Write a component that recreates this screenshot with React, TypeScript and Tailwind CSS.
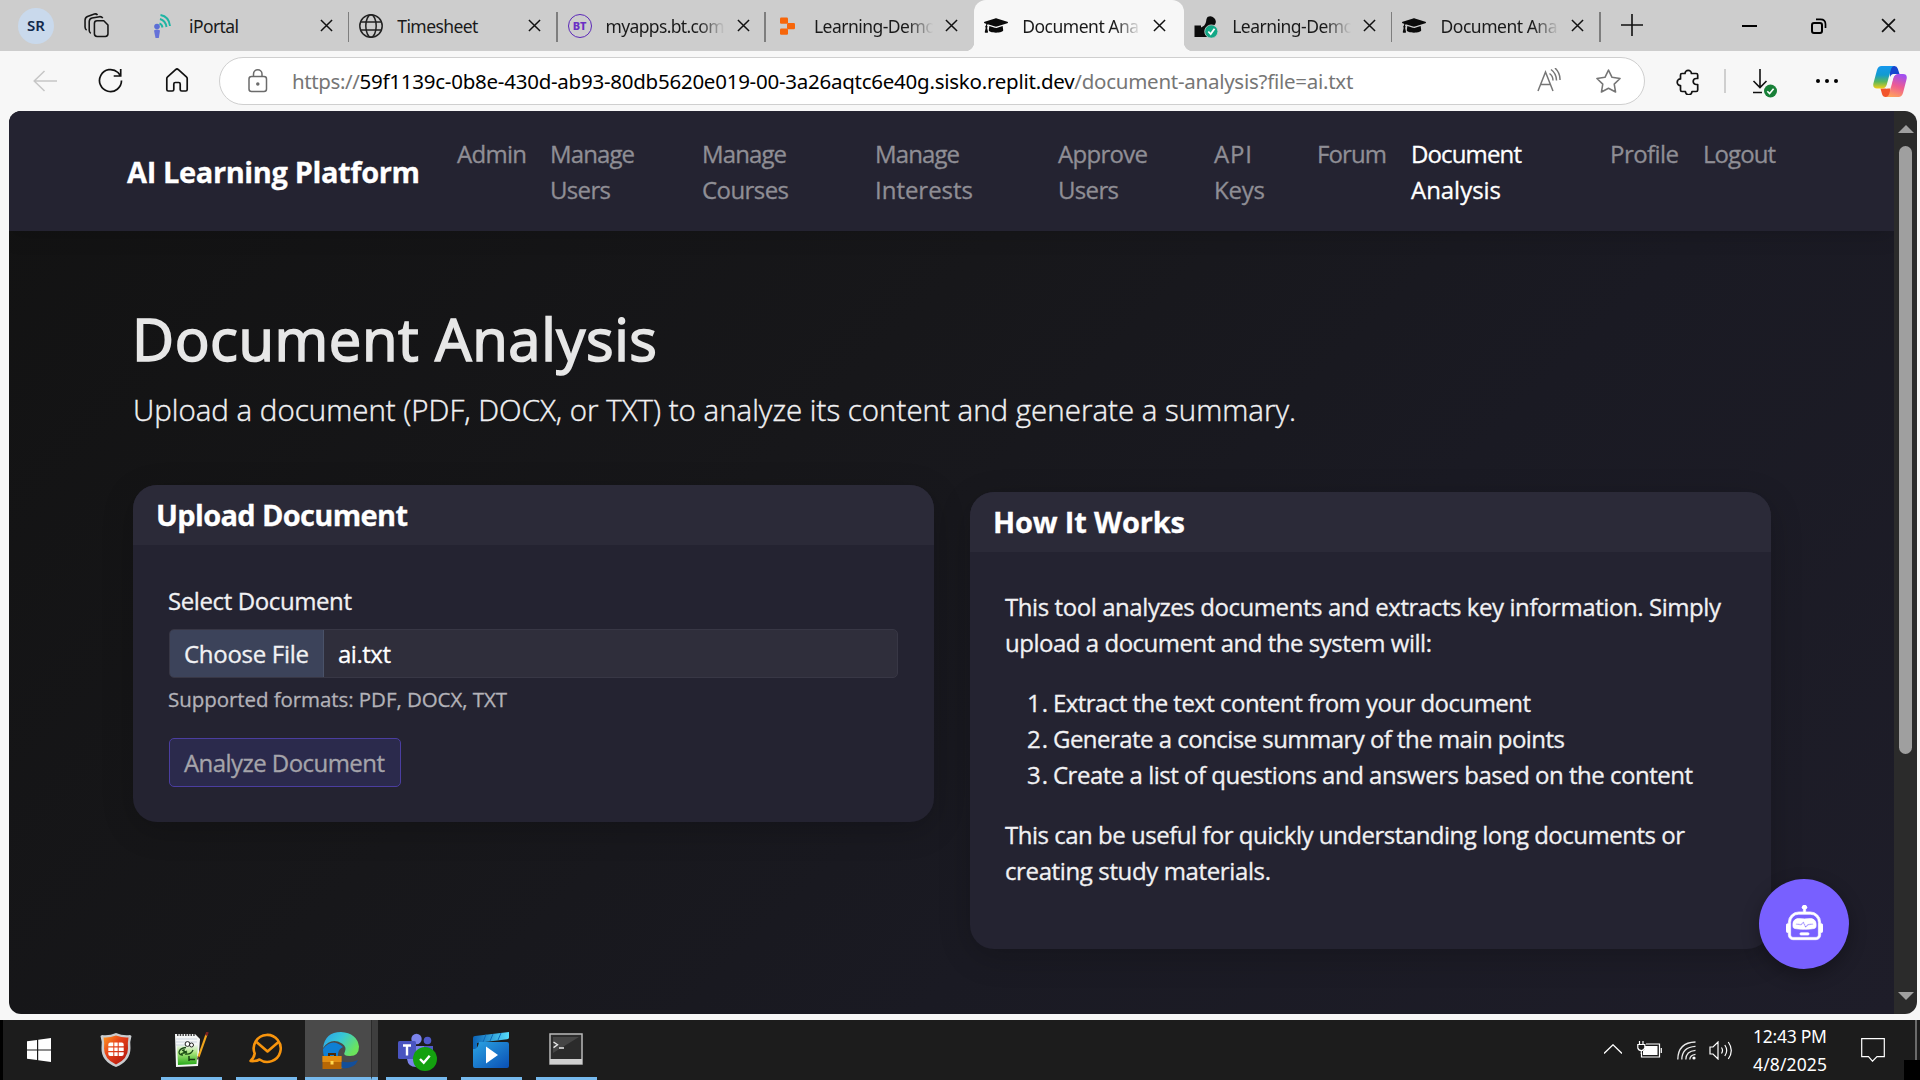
import React, { useLayoutEffect, useRef, useState } from "react";
import { FaGraduationCap } from "react-icons/fa";
import { BsRobot } from "react-icons/bs";

/* Single line of text whose tracking is adjusted to fill the given width. */
function Line({ w, children, className = "" }: { w: number; children: string; className?: string }) {
  const ref = useRef<HTMLSpanElement>(null);
  const [spacing, setSpacing] = useState(0);
  useLayoutEffect(() => {
    const el = ref.current;
    if (!el) return;
    el.style.letterSpacing = "0px";
    const natural = el.getBoundingClientRect().width;
    setSpacing((w - natural) / Math.max(1, children.length - 1));
    el.style.letterSpacing = `${(w - natural) / Math.max(1, children.length - 1)}px`;
  }, [w, children]);
  return (
    <span ref={ref} className={`inline-block whitespace-pre ${className}`} style={{ letterSpacing: `${spacing}px` }}>
      {children}
    </span>
  );
}

const Cross = ({ className = "" }: { className?: string }) => (
  <svg viewBox="0 0 14 14" className={className} fill="none" stroke="#111" strokeWidth="1.6">
    <path d="M1 1l12 12M13 1L1 13" />
  </svg>
);

const PortalIcon = () => (
  <svg viewBox="0 0 24 24" className="size-6" fill="none">
    <circle cx="6" cy="12.500" r="2.800" fill="#5b6fd6" />
    <path d="M3 16.500q3-2 6 0l-1.200 7.500H4.500z" fill="#6672d8" />
    <path d="M8.500 9.500q2.500.8 3 4M9 5q5.500 1.500 6.500 8M9.500 1q8.500 1.500 9.500 11" stroke="#1fb5a4" strokeWidth="1.900" />
  </svg>
);

const GlobeIcon = () => (
  <svg viewBox="0 0 24 24" className="size-6" fill="none" stroke="#222" strokeWidth="1.5">
    <circle cx="12" cy="12" r="11.2" />
    <ellipse cx="12" cy="12" rx="5.2" ry="11.200" />
    <path d="M1.800 8h20.400M1.800 16h20.400" />
  </svg>
);

const BtIcon = () => (
  <span className="flex size-6 items-center justify-center rounded-full border-[1.5px] border-[#5b28b8] text-[11px] leading-none font-extrabold text-[#6a2fc4]">
    BT
  </span>
);

const ReplitIcon = () => (
  <svg viewBox="0 0 24 24" className="size-6" fill="#f7660a">
    <rect x="4" y="3.500" width="8" height="6.300" rx="1.200" />
    <rect x="11" y="9" width="8" height="6.300" rx="1.200" />
    <rect x="4" y="14.500" width="8" height="6.300" rx="1.200" />
  </svg>
);

const SonarIcon = () => (
  <svg viewBox="0 0 24 24" className="size-6">
    <path d="M.5 11.500h6.500v2q4-1.500 5-5.500 0-3 1.500-5a5.500 5.500 0 0 1 7.500 7.500q-1.500 1.500-4 1.500l-4 4v7H.5z" fill="#0b0b0b" />
    <circle cx="17.300" cy="17.500" r="6.600" fill="#12a886" stroke="#cdcdcd" strokeWidth=".8" />
    <path d="M14.300 17.500l2.400 2.500 3.800-5.200" fill="none" stroke="#fff" strokeWidth="1.800" />
  </svg>
);

const CapIcon = () => <FaGraduationCap size={25} color="#0a0a0a" />;

const tabs = [
  { icon: <PortalIcon />, label: "iPortal", w: 50 },
  { icon: <GlobeIcon />, label: "Timesheet", w: 81 },
  { icon: <BtIcon />, label: "myapps.bt.com", w: 119, fade: true },
  { icon: <ReplitIcon />, label: "Learning-Demo", w: 122, fade: true },
  { icon: <CapIcon />, label: "Document Ana", w: 117, fade: true, active: true },
  { icon: <SonarIcon />, label: "Learning-Demo", w: 122, fade: true },
  { icon: <CapIcon />, label: "Document Ana", w: 117, fade: true },
];

function TabStrip() {
  return (
    <div className="flex h-[51px] shrink-0 items-stretch bg-[#cdcdcd] text-[#1a1a1a]">
      <div className="flex w-[141px] shrink-0 items-center">
        <span className="ml-[18px] flex size-9 items-center justify-center rounded-full bg-[#c9d9ec] text-[15px] font-semibold text-[#12294d]">
          SR
        </span>
        <svg viewBox="0 0 24 24" className="ml-[30px] size-[25px]" fill="none" stroke="#161616" strokeWidth="1.500" strokeLinejoin="round">
          <path d="M12.500 7.500h6.500l4 4V20q0 2.500-2.500 2.500h-8Q10 22.500 10 20V10q0-2.500 2.500-2.500z" />
          <path d="M6.500 19.500q-1.500-1-1.500-3V8.500q0-3 2.700-3.700L15 3.500q2-.2 3 1.500M2.500 16.500Q1 15.500 1 13.500V7q0-2.600 2.300-3.700L10 .9q2-.3 3 1" />
        </svg>
      </div>
      {tabs.map((t, i) => (
        <div
          key={i}
          className={
            t.active
              ? "relative flex w-[210px] shrink-0 items-center rounded-t-[12px] bg-[#f7f7f7] pl-[10px]"
              : "relative flex w-[208.300px] shrink-0 items-center pl-[10px]"
          }
        >
          {t.active && (
            <>
              <span className="absolute bottom-0 -left-[9px] size-[9px] bg-[radial-gradient(circle_at_0_0,#cdcdcd_9px,#f7f7f7_9.500px)]" />
              <span className="absolute -right-[9px] bottom-0 size-[9px] bg-[radial-gradient(circle_at_100%_0,#cdcdcd_9px,#f7f7f7_9.500px)]" />
            </>
          )}
          <span className="flex w-6 justify-center">{t.icon}</span>
          <span
            className={
              t.fade
                ? "ml-[14px] w-[119px] overflow-hidden text-[17.500px] leading-6 [mask-image:linear-gradient(90deg,#000_78%,transparent)]"
                : "ml-[14px] w-[119px] overflow-hidden text-[17.500px] leading-6"
            }
          >
            <Line w={t.w}>{t.label}</Line>
          </span>
          <Cross className="ml-[12px] size-[13px]" />
          {(i === 0 || i === 1 || i === 2 || i === 5 || i === 6) && (
            <span className="absolute top-[12px] right-0 h-[30px] w-[1.500px] bg-[#7e7e7e]" />
          )}
        </div>
      ))}
      <svg viewBox="0 0 22 22" className="mt-[14px] ml-[20px] size-[22px]" fill="none" stroke="#111" strokeWidth="1.600">
        <path d="M11 0v22M0 11h22" />
      </svg>
      <div className="ml-auto flex items-center gap-[54px] pr-[24px]">
        <span className="h-[2px] w-[15px] bg-black" />
        <svg viewBox="0 0 16 16" className="size-4" fill="none" stroke="#000" strokeWidth="2">
          <rect x="1" y="5" width="10" height="10" rx="2" />
          <path d="M5 1.300h4.500q5 0 5 5V10" strokeWidth="1.700" />
        </svg>
        <Cross className="size-[15px]" />
      </div>
    </div>
  );
}

function Toolbar() {
  return (
    <div className="flex h-[60px] shrink-0 items-start bg-[#f7f7f7]">
      <svg viewBox="0 0 24 22" className="mt-[19px] ml-[33px] h-[22px] w-6" fill="none" stroke="#c6c6c6" strokeWidth="1.500">
        <path d="M24 11H1M11.500 1L1.200 11l10.300 10" />
      </svg>
      <svg viewBox="0 0 25 25" className="mt-[17px] ml-[41px] size-[25px]" fill="none" stroke="#111" strokeWidth="1.700">
        <path d="M23.500 12.500a11 11 0 1 1-3.500-8l2.500 3.200M22.700 1v7h-7" />
      </svg>
      <svg viewBox="0 0 24 24" className="mt-[17px] ml-[42px] size-6" fill="none" stroke="#111" strokeWidth="1.700" strokeLinejoin="round">
        <path d="M1.800 10.500q0-1 .8-1.700l8-7.200q1.400-1.200 2.800 0l8 7.200q.8.700.8 1.700v11q0 1.500-1.500 1.500h-4q-1.500 0-1.500-1.500V16q0-1.500-1.500-1.500h-3.400Q8.800 14.500 8.800 16v5.500q0 1.500-1.500 1.500h-4q-1.500 0-1.500-1.500z" />
      </svg>
      <div className="mt-[6px] ml-[30px] flex h-[48px] w-[1426px] items-center rounded-full border-[1.500px] border-[#cfcfcf] bg-white">
        <svg viewBox="0 0 20 24" className="ml-[28px] h-6 w-5" fill="none" stroke="#6b6b6b" strokeWidth="1.500">
          <rect x="1" y="7.500" width="17.500" height="15" rx="2.500" />
          <path d="M5.500 7.500V5a4.200 4.200 0 0 1 8.500 0v2.500" />
          <circle cx="9.800" cy="15" r="1" fill="#6b6b6b" />
        </svg>
        <div className="-mt-px ml-[24px] flex w-[1245px] text-[20.500px] leading-[30px]">
          <Line w={68} className="text-[#767676]">https://</Line>
          <Line w={715} className="text-black">59f1139c-0b8e-430d-ab93-80db5620e019-00-3a26aqtc6e40g.sisko.replit.dev</Line>
          <Line w={279} className="text-[#767676]">/document-analysis?file=ai.txt</Line>
        </div>
        <svg viewBox="0 0 24 24" className="-mt-[2px] size-6" fill="none" stroke="#767676" strokeWidth="1.500">
          <path d="M1 23L8.500 4l7.500 19M3.700 16.500h9.600M12.500 5.500q3.500 2.500 3.500 7M14 1.500q5.500 4 5.500 11M18 0q5.300 5 5 12" />
        </svg>
        <svg viewBox="0 0 24 24" className="ml-[35px] size-[25px]" fill="none" stroke="#767676" strokeWidth="1.500" strokeLinejoin="round">
          <path d="M12 1l3.400 7 7.700 1.100-5.600 5.400 1.300 7.600-6.800-3.600-6.800 3.600 1.300-7.600L.9 9.100 8.600 8z" />
        </svg>
      </div>
      <svg viewBox="0 0 24 26" className="mt-[18px] ml-[31px] h-[26px] w-6" fill="none" stroke="#111" strokeWidth="1.700" strokeLinejoin="round">
        <path d="M4.500 6q0-1.500 1.500-1.500h3a3.200 3.200 0 0 1 6.400 0h4.800q1.500 0 1.500 1.500v3.500h-1.500a3 3 0 0 0 0 6h1.500V21q0 1.500-1.500 1.500H16a3.300 3.300 0 0 1-6.600 0H6q-1.500 0-1.500-1.500v-4.500a3.300 3.300 0 0 1 0-6.600z" />
      </svg>
      <span className="mt-[18px] ml-[24px] h-6 w-[1.500px] bg-[#cfcfcf]" />
      <svg viewBox="0 0 26 30" className="mt-[18px] ml-[26px] h-[30px] w-[26px]" fill="none" stroke="#111" strokeWidth="1.600">
        <path d="M8 0v18M1.500 12L8 18.500 14.500 12M1 23.500h9" />
        <circle cx="18.500" cy="22" r="6.500" fill="#188038" stroke="none" />
        <path d="M15.300 22.200l2.300 2.400 4-4.800" stroke="#fff" />
      </svg>
      <div className="mt-[28px] ml-[38px] flex gap-[5px]">
        <span className="size-[4px] rounded-full bg-black" />
        <span className="size-[4px] rounded-full bg-black" />
        <span className="size-[4px] rounded-full bg-black" />
      </div>
      <svg viewBox="0 0 34 31" className="mt-[15px] ml-[35px] h-[31px] w-[34px]">
        <defs>
          <linearGradient id="cpA" x1="0" y1="0" x2="0" y2="1">
            <stop offset="0" stopColor="#1698ee" />
            <stop offset=".4" stopColor="#139bd0" />
            <stop offset=".7" stopColor="#5bb75c" />
            <stop offset="1" stopColor="#f5cd16" />
          </linearGradient>
          <linearGradient id="cpB" x1=".6" y1="0" x2=".3" y2="1">
            <stop offset="0" stopColor="#a14ff0" />
            <stop offset=".5" stopColor="#ee5c92" />
            <stop offset="1" stopColor="#ffa25c" />
          </linearGradient>
        </defs>
        <path d="M16 0h5.500q2.500 0 3.300 2.800L26.500 8H21q-3 0-4 3z" fill="#1746cf" />
        <path d="M18 31h-5.500q-2.700 0-3.500-3l-1.500-5.500H13q3 0 4-3z" fill="#f2552c" />
        <path d="M8.500 0H21q-2.300.3-3 3l-4.200 15.500q-1.200 4-4.800 4H4Q-.8 22.500.5 17L4 4Q5.200 0 8.500 0z" fill="url(#cpA)" />
        <path d="M25.500 31H13q2.500-.3 3.200-3l4-15.500q1.200-4.500 4.800-4.500h5q4.800 0 3.500 5.500L30 27q-1.200 4-4.500 4z" fill="url(#cpB)" />
        <path d="M19.500 8.500Q22 8 24 8q-3 .5-4 4l-3 10.500h-4.500q2-.5 3-4z" fill="#f7f7f7" />
      </svg>
    </div>
  );
}

const nav = [
  { lines: [["Admin", 70]], cls: "w-[93px]" },
  { lines: [["Manage", 85], ["Users", 61]], cls: "w-[152px]" },
  { lines: [["Manage", 85], ["Courses", 87]], cls: "w-[173px]" },
  { lines: [["Manage", 85], ["Interests", 98]], cls: "w-[183px]" },
  { lines: [["Approve", 90], ["Users", 61]], cls: "w-[156px]" },
  { lines: [["API", 38], ["Keys", 51]], cls: "w-[103px]" },
  { lines: [["Forum", 70]], cls: "w-[94px]" },
  { lines: [["Document", 111], ["Analysis", 90]], cls: "w-[199px] text-white" },
  { lines: [["Profile", 69]], cls: "w-[93px]" },
  { lines: [["Logout", 73]], cls: "w-[80px]" },
] as { lines: [string, number][]; cls: string }[];

function Content() {
  return (
    <div className="flex w-[1885px] flex-col bg-[linear-gradient(135deg,#121212_0%,#17171a_40%,#1a1a23_65%,#1e1d29_100%)] font-['Open_Sans',sans-serif] text-2xl leading-9 text-[#f1f1f3] [-webkit-text-stroke:0.3px]">
      <header className="flex h-[120px] shrink-0 bg-[#242331] pl-[118px] shadow-[0_4px_20px_rgba(0,0,0,0.15)]">
        <div className="mt-[38px] w-[330px] text-[29px] leading-[45px] font-bold text-white">
          <Line w={293}>AI Learning Platform</Line>
        </div>
        <nav className="mt-[25px] flex text-[#8f8e95]">
          {nav.map((n, i) => (
            <a key={i} className={`flex flex-col items-start ${n.cls}`}>
              {n.lines.map(([t, w]) => (
                <Line key={t} w={w}>{t}</Line>
              ))}
            </a>
          ))}
        </nav>
      </header>
      <main className="flex flex-col pl-[124px]">
        <h1 className="mt-[72px] h-[72px] text-[58px] leading-[72px] font-medium text-[#e7e7e7] [-webkit-text-stroke:1.6px]">
          <Line w={525} className="-ml-px">Document Analysis</Line>
        </h1>
        <p className="mt-[12px] h-[45px] text-[29.500px] leading-[45px] font-light [-webkit-text-stroke:0.4px]">
          <Line w={1163}>Upload a document (PDF, DOCX, or TXT) to analyze its content and generate a summary.</Line>
        </p>
        <div className="mt-[53px] flex items-start gap-9">
          <section className="h-[337px] w-[801px] overflow-hidden rounded-3xl bg-[#242331] shadow-[0_8px_32px_rgba(0,0,0,0.2)]">
            <h2 className="h-[60px] bg-[#2b2a38] pt-[7px] pl-[23px] text-[29px] leading-[45px] font-bold text-white">
              <Line w={252}>Upload Document</Line>
            </h2>
            <div className="flex flex-col items-start pr-9 pl-[35px] pt-[38px]">
              <Line w={184}>Select Document</Line>
              <div className="mt-[10px] ml-px flex h-[49px] w-[729px] items-stretch overflow-hidden rounded-[5px] border-[1.500px] border-[#383745] bg-[#2f2e3b] leading-[47px]">
                <span className="w-[154px] border-r border-[#4a5268] bg-[#3c435a] pl-[14px]">
                  <Line w={125}>Choose File</Line>
                </span>
                <Line w={53} className="ml-[14px] text-white">ai.txt</Line>
              </div>
              <Line w={339} className="mt-[5px] text-[20.500px] leading-[32px] text-[#b3b2b8]">Supported formats: PDF, DOCX, TXT</Line>
              <button className="mt-[23px] ml-px h-[49px] w-[232px] rounded-[5px] border-[1.500px] border-[#4b3ea0] bg-[#2b2a4c] pl-[14px] text-left leading-[46px] text-[#a5a4aa]">
                <Line w={201}>Analyze Document</Line>
              </button>
            </div>
          </section>
          <section className="mt-[7px] h-[457px] w-[801px] overflow-hidden rounded-3xl bg-[#242331] shadow-[0_8px_32px_rgba(0,0,0,0.2)]">
            <h2 className="h-[60px] bg-[#2b2a38] pt-[7px] pl-[23px] text-[29px] leading-[45px] font-bold text-white">
              <Line w={192}>How It Works</Line>
            </h2>
            <div className="flex flex-col items-start gap-6 pt-[37px] pl-[35px]">
              <p className="flex flex-col items-start">
                <Line w={716}>This tool analyzes documents and extracts key information. Simply</Line>
                <Line w={427}>upload a document and the system will:</Line>
              </p>
              <div className="flex flex-col pl-[22px]">
                <div className="flex"><span className="w-[26px]"><Line w={21}>1.</Line></span><Line w={478}>Extract the text content from your document</Line></div>
                <div className="flex"><span className="w-[26px]"><Line w={21}>2.</Line></span><Line w={512}>Generate a concise summary of the main points</Line></div>
                <div className="flex"><span className="w-[26px]"><Line w={21}>3.</Line></span><Line w={640}>Create a list of questions and answers based on the content</Line></div>
              </div>
              <p className="flex flex-col items-start">
                <Line w={680}>This can be useful for quickly understanding long documents or</Line>
                <Line w={266}>creating study materials.</Line>
              </p>
            </div>
          </section>
        </div>
      </main>
    </div>
  );
}

const ShieldIcon = () => (
  <svg viewBox="0 0 32 36" className="h-9 w-8">
    <defs>
      <linearGradient id="sh" x1="0" y1="0" x2="1" y2="1">
        <stop offset="0" stopColor="#ff9a1f" />
        <stop offset=".4" stopColor="#e8421a" />
        <stop offset="1" stopColor="#a80f0c" />
      </linearGradient>
    </defs>
    <path d="M16 1q7 3 14 2l1.500 1q-2 6-1 12 0 13-14.500 19Q1 29 1.500 16q1-6-1-12L2 3q7 1 14-2z" fill="#c9cccf" />
    <path d="M16 3.500q6.500 2.500 12.500 2-1 5-.5 11 0 10.500-12 16-12-5.500-12-16 .5-6-.5-11 6 .5 12.500-2z" fill="url(#sh)" />
    <g fill="#fff">
      <path d="M10.300 10.500h3v3.700H8.300v-1.700q0-2 2-2zM14.300 10.500h3.400v3.700h-3.400zM18.700 10.500h3q2 0 2 2v1.700h-5zM8.300 15.500h5v3.500h-5zM14.300 15.500h3.400v3.500h-3.400zM18.700 15.500h5v3.500h-5zM8.300 20.300h5V24h-3q-2 0-2-2zM14.300 20.300h3.400V24h-3.400zM18.700 20.300h5V22q0 2-2 2h-3z" />
    </g>
  </svg>
);

const NotepadIcon = () => (
  <svg viewBox="0 0 36 36" className="size-9">
    <defs>
      <linearGradient id="np" x1="0" y1="0" x2="0" y2="1">
        <stop offset="0" stopColor="#eef5ee" />
        <stop offset=".4" stopColor="#a8e67a" />
        <stop offset="1" stopColor="#25a818" />
      </linearGradient>
    </defs>
    <path d="M2 2h20l5 5-2 27L3 35z" fill="#f4f6f6" />
    <path d="M4 13h21l-1.500 19L5 33z" fill="url(#np)" />
    <path d="M3 7h21M3 10h21M3 13h12" stroke="#bcc7d6" strokeWidth=".7" />
    <path d="M4 3h18" stroke="#444" strokeWidth="2" strokeDasharray="1.500 1.200" />
    <path d="M6 20q1-4 7-4.500M12 22q6 1 8-4M6 20q0 3 4 3M9 18l5 3M8 22l6-3M11 17v5" stroke="#1d4d17" strokeWidth="1.300" fill="none" />
    <circle cx="14.500" cy="12" r="2.400" fill="#fff" stroke="#222" />
    <circle cx="18.500" cy="13" r="2" fill="#fff" stroke="#222" />
    <path d="M16 24v5M16 27.500h6" stroke="#163a10" strokeWidth="1.400" />
    <path d="M33.500 2.500L25.500 25" stroke="#f0a51c" strokeWidth="2.200" />
    <path d="M34.500 0l-1.200 3.500" stroke="#7d2320" strokeWidth="2.600" />
    <path d="M25.500 24.500L24.700 27.500" stroke="#51382a" strokeWidth="1.500" />
  </svg>
);

const MailIcon = () => (
  <svg viewBox="0 0 34 32" className="h-8 w-[34px]" fill="none" stroke="#f7940d" strokeWidth="2.600" strokeLinejoin="round">
    <path d="M5.700 20.500A13.500 13.500 0 1 1 10.500 26.500Q7 28.500 1.500 28q3.500-3 4.200-7.500z" />
    <path d="M7.500 9l11 9.500L29.500 9" />
  </svg>
);

const EdgeIcon = () => (
  <svg viewBox="0 0 38 38" className="size-[38px]">
    <defs>
      <linearGradient id="ed1" x1="0" y1="0" x2="1" y2=".5">
        <stop offset="0" stopColor="#2a9fe8" />
        <stop offset=".5" stopColor="#37c7d6" />
        <stop offset="1" stopColor="#6be45c" />
      </linearGradient>
    </defs>
    <path d="M1 18q0 19 18 19 3-.5 3-2-7-4-6-12 .5-5 5-7Q10 6 1 18z" fill="#0f7fd4" />
    <path d="M19 30q8 3 17-1-3 8-14 8.500-5-2-3-7.500z" fill="#134f9a" />
    <path d="M1 17Q3 1 19 1q16 1 18 14.500Q37 25 28 25q-8 0-5-4.500 2-4.500-3-8Q9 6 1 17z" fill="url(#ed1)" />
    <path d="M7 25v-2h6v2" fill="none" stroke="#4b2907" strokeWidth="2" />
    <rect x="0.500" y="25" width="19" height="13" fill="#b86704" />
    <rect x="0.500" y="25" width="19" height="6" fill="#e28e12" />
    <rect x="8.500" y="30" width="3" height="3.500" fill="#ffd84f" />
  </svg>
);

const TeamsIcon = () => (
  <svg viewBox="0 0 40 40" className="size-10">
    <circle cx="19.500" cy="7" r="5.200" fill="#7b83eb" />
    <circle cx="30.500" cy="8.500" r="3.800" fill="#5059c9" />
    <path d="M24 14h12v10q0 7-6 7-6-1-6-7z" fill="#5059c9" />
    <path d="M10 14h17v13q0 8-8 8t-9-8z" fill="#7b83eb" />
    <rect x="1" y="9" width="18" height="18" rx="1.500" fill="#4a54c0" />
    <path d="M6 13.500h8M10 13.500v10" stroke="#fff" strokeWidth="2.400" />
    <circle cx="28" cy="27" r="12" fill="#14a10f" />
    <path d="M23 27l3.700 3.700 6-7" fill="none" stroke="#fff" strokeWidth="2.400" />
  </svg>
);

const MoviesIcon = () => (
  <svg viewBox="0 0 36 36" className="size-9">
    <defs>
      <linearGradient id="mv" x1="0" y1="0" x2="1" y2="1">
        <stop offset="0" stopColor="#2ba4e3" />
        <stop offset="1" stopColor="#0a4fb4" />
      </linearGradient>
      <linearGradient id="mv2" x1="0" y1="0" x2="1" y2="0">
        <stop offset="0" stopColor="#0b62b5" />
        <stop offset="1" stopColor="#56dcfb" />
      </linearGradient>
    </defs>
    <path d="M0 6q0-2 2-2L36 0v5.500q0 1.500-2 1.700L4 11v6H0z" fill="url(#mv2)" />
    <path d="M13 2.500L10 10M20 2l-3 7M28 1l-3 7" stroke="#0d69b8" strokeWidth="1" />
    <path d="M6 10h28q2 0 2 2v22q0 2-2 2H2q-2 0-2-2V17h2q3-1 4-7z" fill="url(#mv)" />
    <path d="M13 14.500l12 8.500-12 8.500z" fill="#fff" />
  </svg>
);

const TerminalIcon = () => (
  <svg viewBox="0 0 34 32" className="h-8 w-[34px]">
    <rect x="1" y="1" width="32" height="30" fill="#2b2b2b" stroke="#b9b9b9" strokeWidth="1.500" />
    <rect x="1" y="26" width="32" height="5" fill="#cfcfcf" />
    <path d="M4 4h26L4 20z" fill="#454545" />
    <path d="M4.500 9l4 2.800-4 2.800M10 15h5" fill="none" stroke="#e8e8e8" strokeWidth="1.400" />
  </svg>
);

const apps = [
  { icon: <ShieldIcon />, cls: "w-[61px] mr-[14px] pr-[2px]" },
  { icon: <NotepadIcon />, cls: "w-[61px] mr-[14px] border-b-[3px] border-[#76b9ed] pt-[3px] pr-[2px]" },
  { icon: <MailIcon />, cls: "w-[61px] mr-[8px] border-b-[3px] border-[#76b9ed] pt-[1px] pr-[2px]" },
  { icon: <EdgeIcon />, cls: "w-[66px] border-b-[3px] border-[#76b9ed] bg-[#4a4a4a] pt-[3px] pl-[5px]" },
  { icon: null, cls: "w-[7px] mr-[8px] border-b-[3px] border-l border-l-[#2b2b2b] border-[#76b9ed] bg-[#3e3e3e]" },
  { icon: <TeamsIcon />, cls: "w-[61px] mr-[14px] border-b-[3px] border-[#76b9ed] pt-[7px]" },
  { icon: <MoviesIcon />, cls: "w-[61px] mr-[14px] border-b-[3px] border-[#76b9ed] pt-[3px] pr-px" },
  { icon: <TerminalIcon />, cls: "w-[61px] border-b-[3px] border-[#76b9ed] pr-px" },
];

function Taskbar() {
  return (
    <div className="flex h-[60px] shrink-0 items-stretch border-l-[3px] border-black bg-[#1c1c1c] text-white">
      <svg viewBox="0 0 24 24" className="mt-[18px] ml-[24px] size-6" fill="#fff">
        <path d="M0 3.300l10-1.400v9.600H0zM11.200 1.700L24 0v11.500H11.200zM0 12.600h10v9.500L0 20.700zM11.200 12.600H24V24l-12.800-1.700z" />
      </svg>
      <div className="ml-[35px] flex">
        {apps.map((a, i) => (
          <div key={i} className={`flex items-center justify-center ${a.cls}`}>{a.icon}</div>
        ))}
      </div>
      <div className="ml-auto flex items-start">
        <svg viewBox="0 0 18 10" className="mt-[24px] h-[10px] w-[18px]" fill="none" stroke="#fff" strokeWidth="1.300">
          <path d="M0 9.500L9 .8l9 8.700" />
        </svg>
        <svg viewBox="0 0 25 18" className="mt-[20px] ml-[15px] h-[18px] w-[25px]" fill="none" stroke="#fff" strokeWidth="1.200">
          <path d="M9 4h13.500v13H4.500V13M24.300 8v5" />
          <path d="M8 6h12.500v9H6v-4q2-1 2-3z" fill="#fff" stroke="none" />
          <path d="M2.500 1v3.500M6 1v3.500M.8 4.500h7V8Q7 10.500 4.300 10.500 1.500 10.500.8 8zM4.300 10.500V14" />
        </svg>
        <svg viewBox="0 0 20 19" className="mt-[21px] ml-[15px] h-[19px] w-5" fill="none" stroke="#e8e8e8" strokeWidth="1.300">
          <path d="M.8 18.500Q1 1.500 18.500 1M4.800 18.500Q5 6 18.500 5.300M8.800 18.500Q9 10 18.500 9.300M12.800 18.500Q13 14 18.500 13.300" />
          <circle cx="17" cy="17" r="1.600" fill="#fff" stroke="none" />
        </svg>
        <svg viewBox="0 0 24 19" className="mt-[21px] ml-[12px] h-[19px] w-6" fill="none" stroke="#fff" strokeWidth="1.200">
          <path d="M1 6h3l5-5v17l-5-5H1zM12.500 6.500q2 3 0 6M15.800 4q3.800 5.500 0 11M19.300 1q6 8.500 0 17" />
        </svg>
        <div className="ml-[20px] flex w-[108px] flex-col items-start pt-[2px] text-[17.500px] leading-7">
          <Line w={74}>12:43 PM</Line>
          <Line w={74}>4/8/2025</Line>
        </div>
        <svg viewBox="0 0 24 24" className="mt-[18px] size-6" fill="none" stroke="#fff" strokeWidth="1.200">
          <path d="M.7.700h22.600v18H16l-4.500 4.500-4-4.500H.7z" />
        </svg>
        <div className="ml-[19px] flex h-[60px] w-4 flex-col">
          <div className="ml-[11px] h-10 w-[2px] bg-[#6a6a6a]" />
          <div className="h-5 w-4 bg-black" />
        </div>
      </div>
    </div>
  );
}

export default function App() {
  return (
    <div className="flex h-[1080px] w-[1920px] flex-col overflow-hidden bg-[#f7f7f7] font-['Noto_Sans',sans-serif]">
      <TabStrip />
      <Toolbar />
      <div className="relative mr-[3px] mb-[6px] ml-[9px] flex h-[903px] shrink-0 overflow-hidden rounded-[12px]">
        <Content />
        <div className="flex w-[23px] flex-col items-center bg-[#2b2b2b]">
          <svg viewBox="0 0 16 8" className="mt-[14px] h-2 w-4" fill="#a0a0a0"><path d="M0 8L8 0l8 8z" /></svg>
          <div className="mt-[13px] h-[608px] w-[13px] rounded-full bg-[#9f9f9f]" />
          <svg viewBox="0 0 16 8" className="mt-auto mb-[14px] h-2 w-4" fill="#a0a0a0"><path d="M0 0l8 8 8-8z" /></svg>
        </div>
        <button className="absolute top-[768px] left-[1750px] flex size-[90px] items-center justify-center rounded-full bg-[#7860ff] shadow-[0_6px_18px_rgba(0,0,0,0.3)]">
          <BsRobot size={37} color="#fff" className="-mt-px" stroke="#fff" strokeWidth="0.300" />
        </button>
      </div>
      <Taskbar />
    </div>
  );
}
